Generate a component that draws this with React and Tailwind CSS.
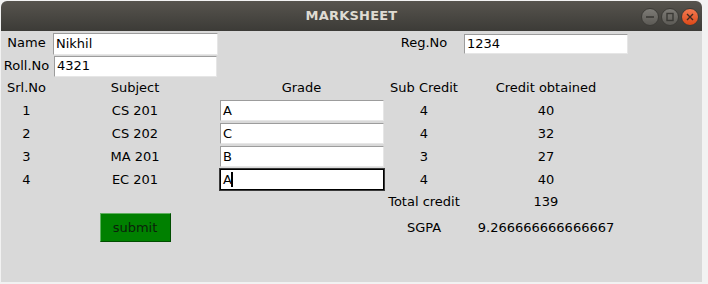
import React from "react";

const rows = [
  { srl: 1, subject: "CS 201", grade: "A", credit: 4, obtained: 40 },
  { srl: 2, subject: "CS 202", grade: "C", credit: 4, obtained: 32 },
  { srl: 3, subject: "MA 201", grade: "B", credit: 3, obtained: 27 },
  { srl: 4, subject: "EC 201", grade: "A", credit: 4, obtained: 40, focused: true },
];

const Entry = ({ value, className = "", focused = false, cursor = false }) => (
  <div
    className={`bg-white flex items-center pl-[2px] text-black ${
      focused
        ? "border border-black outline outline-1 outline-[#3a3a3a]"
        : "border border-t-[#9c9c9c] border-l-[#9c9c9c] border-r-[#e6e6e6] border-b-[#e6e6e6]"
    } ${className}`}
  >
    <span>{value}</span>
    {cursor && <span className="w-[2px] h-[15px] bg-black ml-[-1px]" />}
  </div>
);

const WinButton = ({ kind }) => {
  if (kind === "close") {
    return (
      <div className="w-[18px] h-[18px] rounded-full bg-gradient-to-b from-[#f5794f] to-[#dd4814] border border-[#3c3b37] flex items-center justify-center">
        <svg width="8" height="8" viewBox="0 0 8 8">
          <path d="M1 1L7 7M7 1L1 7" stroke="#3c2a22" strokeWidth="1.4" />
        </svg>
      </div>
    );
  }
  return (
    <div className="w-[18px] h-[18px] rounded-full bg-gradient-to-b from-[#7d7b76] to-[#5c5a55] border border-[#3c3b37] flex items-center justify-center">
      {kind === "min" ? (
        <svg width="10" height="10" viewBox="0 0 10 10">
          <path d="M1 5H9" stroke="#3a3935" strokeWidth="1.6" />
        </svg>
      ) : (
        <svg width="10" height="10" viewBox="0 0 10 10">
          <rect x="2" y="1.5" width="6" height="7" fill="none" stroke="#3a3935" strokeWidth="1.4" />
        </svg>
      )}
    </div>
  );
};

export default function App() {
  return (
    <div
      className="w-[708px] h-[284px] bg-[#f2f2f2] pl-[1px] pt-[1px] text-[13px] text-black"
      style={{ fontFamily: '"DejaVu Sans", sans-serif' }}
    >
      <div className="w-[701px] h-[281px] flex flex-col">
        <div className="h-[30px] rounded-t-[6px] bg-gradient-to-b from-[#57544e] to-[#3c3b37] grid grid-cols-[1fr_auto_1fr] items-center">
          <div />
          <div className="font-bold text-[#dfdbd2] text-[13px] tracking-[0.2px]">MARKSHEET</div>
          <div className="flex justify-end items-center gap-[2px] pr-[3px] pt-[1px]">
            <WinButton kind="min" />
            <WinButton kind="max" />
            <WinButton kind="close" />
          </div>
        </div>

        <div className="flex-1 bg-[#d9d9d9]">
          <div className="grid grid-cols-[51px_166px_167px_78px_166px] grid-rows-[24px_22px_22px_23px_23px_23px_23px_21px_31px] items-center">
            <div className="text-center">Name</div>
            <Entry value="Nikhil" className="h-[22px] ml-[1px] mt-[1px]" />
            <div />
            <div className="text-center">Reg.No</div>
            <Entry value="1234" className="h-[20px] ml-[1px] mr-[1px] mt-[1px]" />

            <div className="text-center">Roll.No</div>
            <Entry value="4321" className="h-[21px] ml-[2px] mr-[1px]" />
            <div />
            <div />
            <div />

            <div className="text-center">Srl.No</div>
            <div className="text-center">Subject</div>
            <div className="text-center">Grade</div>
            <div className="text-center">Sub Credit</div>
            <div className="text-center">Credit obtained</div>

            {rows.map((r) => (
              <React.Fragment key={r.srl}>
                <div className="text-center">{r.srl}</div>
                <div className="text-center">{r.subject}</div>
                <Entry
                  value={r.grade}
                  focused={r.focused}
                  cursor={r.focused}
                  className="h-[21px] ml-[2px] mr-[1px]"
                />
                <div className="text-center">{r.credit}</div>
                <div className="text-center">{r.obtained}</div>
              </React.Fragment>
            ))}

            <div />
            <div />
            <div />
            <div className="text-center">Total credit</div>
            <div className="text-center">139</div>

            <div />
            <div className="flex justify-center">
              <button className="w-[71px] h-[29px] bg-[#008000] border border-t-[#5fb05f] border-l-[#5fb05f] border-r-[#004d00] border-b-[#004d00] text-[#0b1f0b]">
                submit
              </button>
            </div>
            <div />
            <div className="text-center">SGPA</div>
            <div className="text-center">9.266666666666667</div>
          </div>
        </div>
      </div>
    </div>
  );
}
